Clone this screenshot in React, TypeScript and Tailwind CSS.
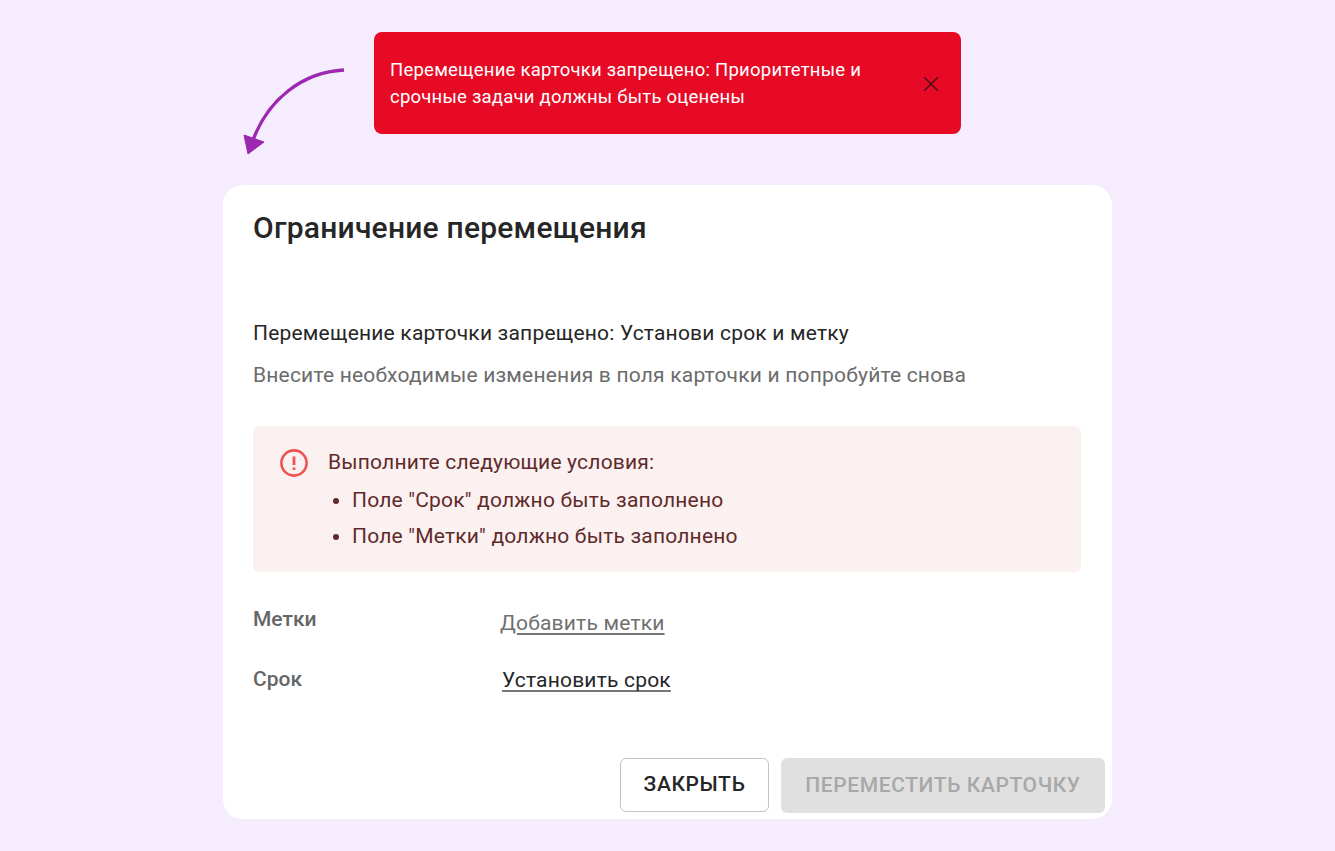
export default function App() {
  return (
    <div className="relative min-h-[851px] bg-[#f5ecfe] pt-8 flex flex-col items-center font-['Roboto',sans-serif]">
      <svg className="absolute left-[240px] top-[64px]" width="110" height="95" viewBox="0 0 110 95" fill="none">
        <path d="M104 6 C62 8 28 36 13 76" stroke="#9c27b0" strokeWidth="3.4" fill="none" />
        <path d="M4 71 L24 78 L8 90 Z" fill="#9c27b0" stroke="#9c27b0" strokeWidth="1" />
      </svg>
      <div className="w-[587px] h-[102px] bg-[#e70a25] rounded-lg flex items-center pl-4 pr-5 justify-between">
        <div className="mt-[2px] w-[500px] text-white text-[18.5px] leading-[27px] tracking-[0.23px]">
          Перемещение карточки запрещено: Приоритетные и срочные задачи должны быть оценены
        </div>
        <svg className="mt-[2px]" width="20" height="20" viewBox="0 0 20 20" fill="none" stroke="#4a0f1a" strokeWidth="1.5">
          <path d="M3.2 3.2 L16.8 16.8 M16.8 3.2 L3.2 16.8" />
        </svg>
      </div>
      <div className="mt-[51px] w-[889px] h-[634px] bg-white rounded-[20px] pl-[30px] pr-[7px] flex flex-col">
        <h1 className="mt-[25px] text-[30px] leading-[36px] font-medium text-[#262626] tracking-[0.225px]">Ограничение перемещения</h1>
        <p className="mt-[73px] text-[21px] leading-[28px] text-[#262626] tracking-[0.197px]">Перемещение карточки запрещено: Установи срок и метку</p>
        <p className="mt-[14px] text-[21px] leading-[28px] text-[#6b6b6b] tracking-[0.197px]">Внесите необходимые изменения в поля карточки и попробуйте снова</p>
        <div className="mt-[37px] w-[828px] h-[146px] bg-[#fbf1f1] rounded-md flex pl-[26px] pt-[18px] text-[#5f2a2a] text-[21px] tracking-[0.197px]">
          <svg className="mt-[4px] shrink-0" width="30" height="30" viewBox="0 0 30 30" fill="none">
            <circle cx="15" cy="15" r="12.6" stroke="#ef5350" strokeWidth="2.6" />
            <path d="M15 8.5 V17" stroke="#ef5350" strokeWidth="2.8" />
            <path d="M15 19.5 V22" stroke="#ef5350" strokeWidth="2.8" />
          </svg>
          <div className="ml-[19px]">
            <div className="leading-[36px]">Выполните следующие условия:</div>
            <ul className="mt-[2px] list-disc pl-[24px]">
              <li className="leading-[36px]">Поле "Срок" должно быть заполнено</li>
              <li className="leading-[36px]">Поле "Метки" должно быть заполнено</li>
            </ul>
          </div>
        </div>
        <div className="mt-[33px] flex text-[21px] h-[28px] items-start">
          <div className="w-[247px] font-medium text-[#666666] leading-[28px]">Метки</div>
          <a className="mt-[4px] text-[#707070] underline decoration-[#757575] underline-offset-[3px] leading-[28px] tracking-[0.197px]">Добавить метки</a>
        </div>
        <div className="mt-[32px] flex text-[21px] h-[28px] items-start">
          <div className="w-[249px] font-medium text-[#666666] leading-[28px]">Срок</div>
          <a className="mt-px text-[#262626] underline decoration-[#757575] [text-decoration-skip-ink:none] underline-offset-[3px] leading-[28px] tracking-[0.197px]">Установить срок</a>
        </div>
        <div className="mt-auto mb-[6px] flex justify-end gap-3 items-start">
          <button className="w-[149px] h-[54px] rounded-md border border-[#c4c4c4] bg-white text-[#262626] text-[21px] font-medium tracking-[0.6px]">ЗАКРЫТЬ</button>
          <button className="w-[324px] h-[55px] rounded-md bg-[#e0e0e0] text-[#a8a8a8] text-[21px] font-medium tracking-[0.6px]">ПЕРЕМЕСТИТЬ КАРТОЧКУ</button>
        </div>
      </div>
    </div>
  );
}
